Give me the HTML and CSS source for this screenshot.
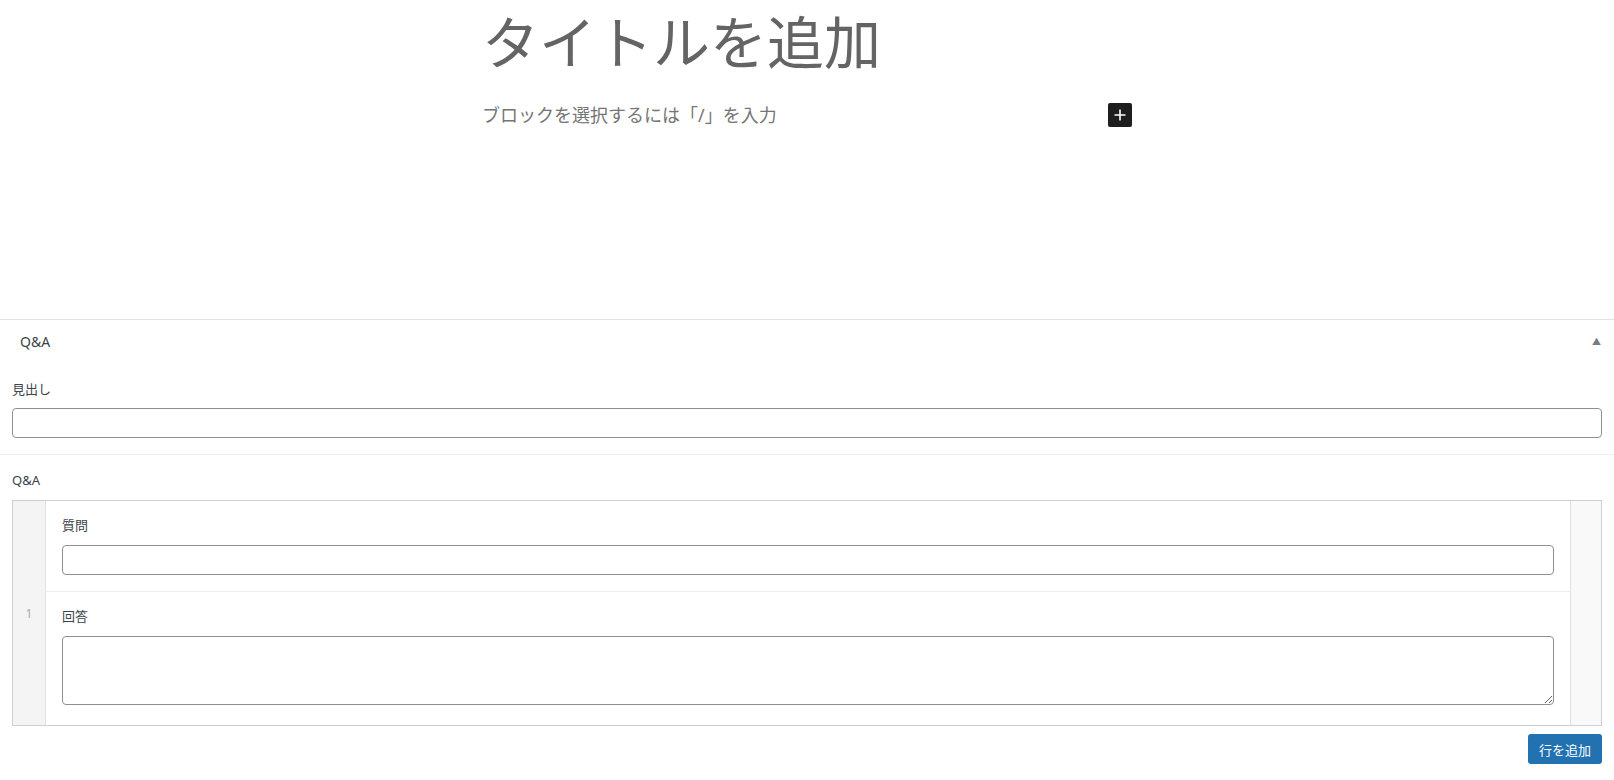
FILE: index.html
```html
<!DOCTYPE html>
<html lang="ja">
<head>
    <meta charset="UTF-8">
    <title>タイトルを追加</title>
    <link rel="stylesheet" href="styles.css">
</head>
<body>
    <div class="editor">
        <div class="editor-inner">
            <h1 class="post-title">タイトルを追加</h1>
            <div class="block-row">
                <p class="block-placeholder">ブロックを選択するには「/」を入力</p>
                <button class="inserter" aria-label="ブロックを追加">
                    <svg width="24" height="24" viewBox="0 0 24 24"><path d="M12 6.5v11M6.5 12h11" stroke="#fff" stroke-width="1.6"/></svg>
                </button>
            </div>
        </div>
    </div>

    <div class="postbox">
        <div class="postbox-header">
            <h2>Q&amp;A</h2>
            <span class="toggle">&#9650;</span>
        </div>

        <div class="field">
            <label class="field-label">見出し</label>
            <input type="text" class="text-input">
        </div>

        <div class="field field-repeater">
            <label class="field-label">Q&amp;A</label>
            <div class="repeater">
                <div class="row-handle">1</div>
                <div class="row-fields">
                    <div class="sub-field">
                        <label class="field-label">質問</label>
                        <input type="text" class="text-input">
                    </div>
                    <div class="sub-field">
                        <label class="field-label">回答</label>
                        <textarea class="text-area"></textarea>
                    </div>
                </div>
                <div class="row-remove"></div>
            </div>
            <div class="repeater-footer">
                <button class="add-row">行を追加</button>
            </div>
        </div>
    </div>
</body>
</html>
```

FILE: styles.css
```css
body {
    margin: 0;
    background: #fff;
    font-family: "Noto Sans", "Noto Sans CJK JP", sans-serif;
    color: #1e1e1e;
}
.editor {
    height: 319px;
    border-bottom: 1px solid #e0e0e0;
}
.editor-inner {
    width: 646px;
    margin: 0 auto;
    padding-top: 3px;
}
.post-title {
    margin: 0 0 0 -2px;
    font-family: "Noto Sans CJK JP", sans-serif;
    font-size: 57px;
    font-weight: 400;
    line-height: 72px;
    color: #646464;
}
.block-row {
    display: flex;
    align-items: center;
    justify-content: space-between;
    margin-top: 26px;
}
.block-placeholder {
    margin: 0 0 0 -2px;
    font-size: 18px;
    line-height: 28px;
    color: #757575;
}
.inserter {
    width: 24px;
    height: 24px;
    margin-right: -2px;
    padding: 0;
    border: none;
    border-radius: 2px;
    background: #1e1e1e;
    display: flex;
}
.postbox-header {
    height: 47px;
    box-sizing: border-box;
    display: flex;
    align-items: center;
    justify-content: space-between;
    padding: 0 13px 4px 20px;
}
.postbox-header h2 {
    margin: 0;
    font-size: 14px;
    font-weight: 400;
    color: #3c434a;
}
.toggle {
    font-size: 9px;
    color: #787c82;
}
.field {
    padding: 14px 12px 16px;
}
.field + .field {
    border-top: 1px solid #eeeeee;
    padding-top: 17px;
    padding-bottom: 12px;
}
.field-label {
    display: block;
    font-size: 13px;
    line-height: 16px;
    color: #3c434a;
    margin-bottom: 11px;
}
.field-repeater > .field-label {
    margin-bottom: 12px;
}
.text-input {
    display: block;
    box-sizing: border-box;
    width: 100%;
    height: 30px;
    margin: 0;
    border: 1px solid #8c8f94;
    border-radius: 4px;
    background: #fff;
}
.text-area {
    display: block;
    box-sizing: border-box;
    width: 100%;
    height: 69px;
    margin: 0 0 4px;
    border: 1px solid #8c8f94;
    border-radius: 4px;
    background: #fff;
}
.repeater {
    display: flex;
    border: 1px solid #ccd0d4;
}
.row-handle {
    width: 32px;
    flex: none;
    display: flex;
    align-items: center;
    justify-content: center;
    background: #f4f4f4;
    border-right: 1px solid #e1e1e1;
    font-size: 12px;
    color: #aaaaaa;
}
.row-fields {
    flex: 1;
}
.sub-field {
    padding: 16px 16px 16px 16px;
}
.sub-field + .sub-field {
    border-top: 1px solid #eeeeee;
}
.sub-field .field-label {
    margin-bottom: 12px;
}
.row-remove {
    width: 30px;
    flex: none;
    background: #f9f9f9;
    border-left: 1px solid #e1e1e1;
}
.repeater-footer {
    display: flex;
    justify-content: flex-end;
    margin-top: 8px;
}
.add-row {
    height: 30px;
    padding: 0 11px;
    border: none;
    border-radius: 3px;
    background: #2271b1;
    color: #fff;
    font-family: "Noto Sans CJK JP", sans-serif;
    font-size: 13px;
}
```
